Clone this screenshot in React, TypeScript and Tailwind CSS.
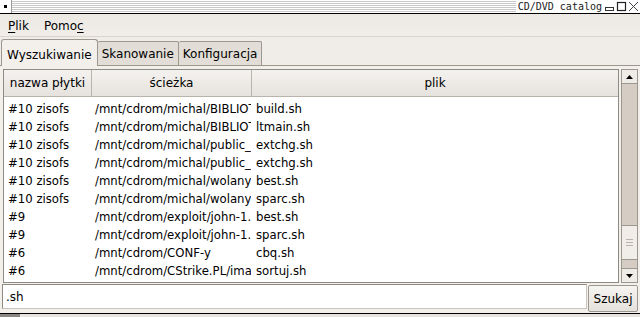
import React from "react";

const rows: [string, string, string][] = [
  ["#10 zisofs", "/mnt/cdrom/michal/BIBLIOTEKI/libtool", "build.sh"],
  ["#10 zisofs", "/mnt/cdrom/michal/BIBLIOTEKI/libtool", "ltmain.sh"],
  ["#10 zisofs", "/mnt/cdrom/michal/public_html/skrypty", "extchg.sh"],
  ["#10 zisofs", "/mnt/cdrom/michal/public_html/old", "extchg.sh"],
  ["#10 zisofs", "/mnt/cdrom/michal/wolany,dir/src", "best.sh"],
  ["#10 zisofs", "/mnt/cdrom/michal/wolany,dir/src", "sparc.sh"],
  ["#9", "/mnt/cdrom/exploit/john-1.6/src", "best.sh"],
  ["#9", "/mnt/cdrom/exploit/john-1.6/src", "sparc.sh"],
  ["#6", "/mnt/cdrom/CONF-y", "cbq.sh"],
  ["#6", "/mnt/cdrom/CStrike.PL/images", "sortuj.sh"],
];

function Arrow({ up }: { up: boolean }) {
  return (
    <svg width="7" height="4" viewBox="0 0 7 4">
      {up ? <polygon points="0,4 7,4 3.5,0" fill="#000" /> : <polygon points="0,0 7,0 3.5,4" fill="#000" />}
    </svg>
  );
}

export default function App() {
  return (
    <div
      className="w-[640px] h-[317px] overflow-hidden flex flex-col bg-[#ede9e4] text-[12px] text-black"
      style={{ fontFamily: '"DejaVu Sans", Verdana, sans-serif' }}
    >
      {/* title bar */}
      <div className="h-[14px] shrink-0 flex items-stretch border-b border-black bg-[repeating-linear-gradient(to_bottom,#ffffff_0px,#ffffff_1px,#c8c8c8_1px,#c8c8c8_2px)]">
        <div className="w-[12px] flex items-center justify-center bg-white border-r border-[#9a9a9a]">
          <div className="w-[3px] h-[3px] bg-black" />
        </div>
        <div className="flex-1" />
        <div
          className="bg-white px-[2px] flex items-center text-[10px] leading-none text-[#222]"
          style={{ fontFamily: '"DejaVu Sans Mono", "Liberation Mono", monospace' }}
        >
          CD/DVD catalog
        </div>
        <div className="flex items-center bg-white gap-[1px] pr-[1px]">
          <svg width="11" height="11" viewBox="0 0 11 11">
            <rect x="1.5" y="6.5" width="8" height="3" fill="none" stroke="#333" />
          </svg>
          <svg width="11" height="11" viewBox="0 0 11 11">
            <rect x="1.5" y="1.5" width="8" height="8" fill="none" stroke="#222" strokeWidth="1.2" />
          </svg>
          <svg width="11" height="11" viewBox="0 0 11 11">
            <path d="M1 1 L10 10 M10 1 L1 10" stroke="#444" strokeWidth="1" />
          </svg>
        </div>
      </div>

      {/* menu bar */}
      <div className="h-[23px] shrink-0 flex items-center gap-[15px] pl-[8px] pt-[2px] bg-[linear-gradient(to_bottom,#ece8e3,#f1eeea)] border-b border-[#d8d3cc]">
        <span>
          <span className="underline underline-offset-2">P</span>lik
        </span>
        <span>
          Pomo<span className="underline underline-offset-2">c</span>
        </span>
      </div>

      {/* tabs */}
      <div className="h-[29px] shrink-0 flex items-end pl-[1px] border-b border-[#9c978f] bg-[#f0ede9] leading-[14px]">
        <div className="h-[27px] px-[5px] pb-[4px] flex items-end bg-[#f3f0ec] border border-b-0 border-[#9c978f] rounded-t-[3px] relative top-[1px]">
          Wyszukiwanie
        </div>
        <div className="h-[24px] px-[4px] pb-[4px] flex items-end bg-[#e2ddd6] border border-b-0 border-l-0 border-[#9c978f] rounded-t-[2px]">
          Skanowanie
        </div>
        <div className="h-[24px] px-[4px] pb-[4px] flex items-end bg-[#e2ddd6] border border-b-0 border-l-0 border-[#9c978f] rounded-t-[2px]">
          Konfiguracja
        </div>
      </div>

      {/* panel */}
      <div className="flex-1 flex flex-col bg-[#f3f0ec] pt-[3px] pl-[3px] pr-[2px]">
        <div className="flex h-[214px]">
          <div className="flex-1 flex flex-col border border-[#8e8a84] bg-white">
            <div className="h-[27px] flex bg-[linear-gradient(to_bottom,#f4f2ef,#e6e2dd)] border-b border-[#b8b3ac]">
              <div className="w-[88px] flex items-center justify-center border-r border-[#b8b3ac]">nazwa płytki</div>
              <div className="w-[160px] flex items-center justify-center border-r border-[#b8b3ac]">ścieżka</div>
              <div className="flex-1 flex items-center justify-center">plik</div>
            </div>
            <div className="flex-1 flex flex-col pt-[4px] overflow-hidden text-[11.7px]">
              {rows.map((r, i) => (
                <div key={i} className="h-[18px] flex items-center whitespace-nowrap">
                  <div className="w-[88px] pl-[4px] overflow-hidden">{r[0]}</div>
                  <div className="w-[159px] pl-[3px] overflow-hidden">{r[1]}</div>
                  <div className="flex-1 pl-[5px] overflow-hidden">{r[2]}</div>
                </div>
              ))}
            </div>
          </div>
          <div className="w-[17px] ml-[2px] flex flex-col border border-[#9c978f] bg-[#d5cdc3]">
            <div className="h-[14px] flex items-center justify-center bg-[#efebe6] border-b border-[#9c978f]">
              <Arrow up />
            </div>
            <div className="flex-1 flex flex-col">
              <div className="flex-1" />
              <div className="h-[35px] bg-[#f1eee9] border-y border-[#9c978f] flex flex-col items-center justify-center gap-[2px]">
                <div className="w-[7px] h-[1px] bg-[#b9b3ab]" />
                <div className="w-[7px] h-[1px] bg-[#b9b3ab]" />
                <div className="w-[7px] h-[1px] bg-[#b9b3ab]" />
              </div>
              <div className="h-[8px]" />
            </div>
            <div className="h-[14px] flex items-center justify-center bg-[#efebe6] border-t border-[#9c978f]">
              <Arrow up={false} />
            </div>
          </div>
        </div>

        {/* search row */}
        <div className="flex items-start gap-[1px] mt-[1px] -ml-[1px]">
          <div className="w-[585px] h-[25px] flex items-center pl-[3px] bg-white border border-[#8e8a84] border-r-[#c9c4bd] border-b-[#c9c4bd]">
            .sh
          </div>
          <div className="w-[50px] h-[27px] mt-[1px] flex items-center justify-center bg-[linear-gradient(to_bottom,#f6f4f1,#e5e1db)] border border-[#9c978f] rounded-[2px]">
            Szukaj
          </div>
        </div>
      </div>

      {/* bottom strip */}
      <div className="h-[4px] shrink-0 flex border-t border-black bg-[#e8e5e0]">
        <div className="w-[20px] bg-[#8b8782]" />
      </div>
    </div>
  );
}
